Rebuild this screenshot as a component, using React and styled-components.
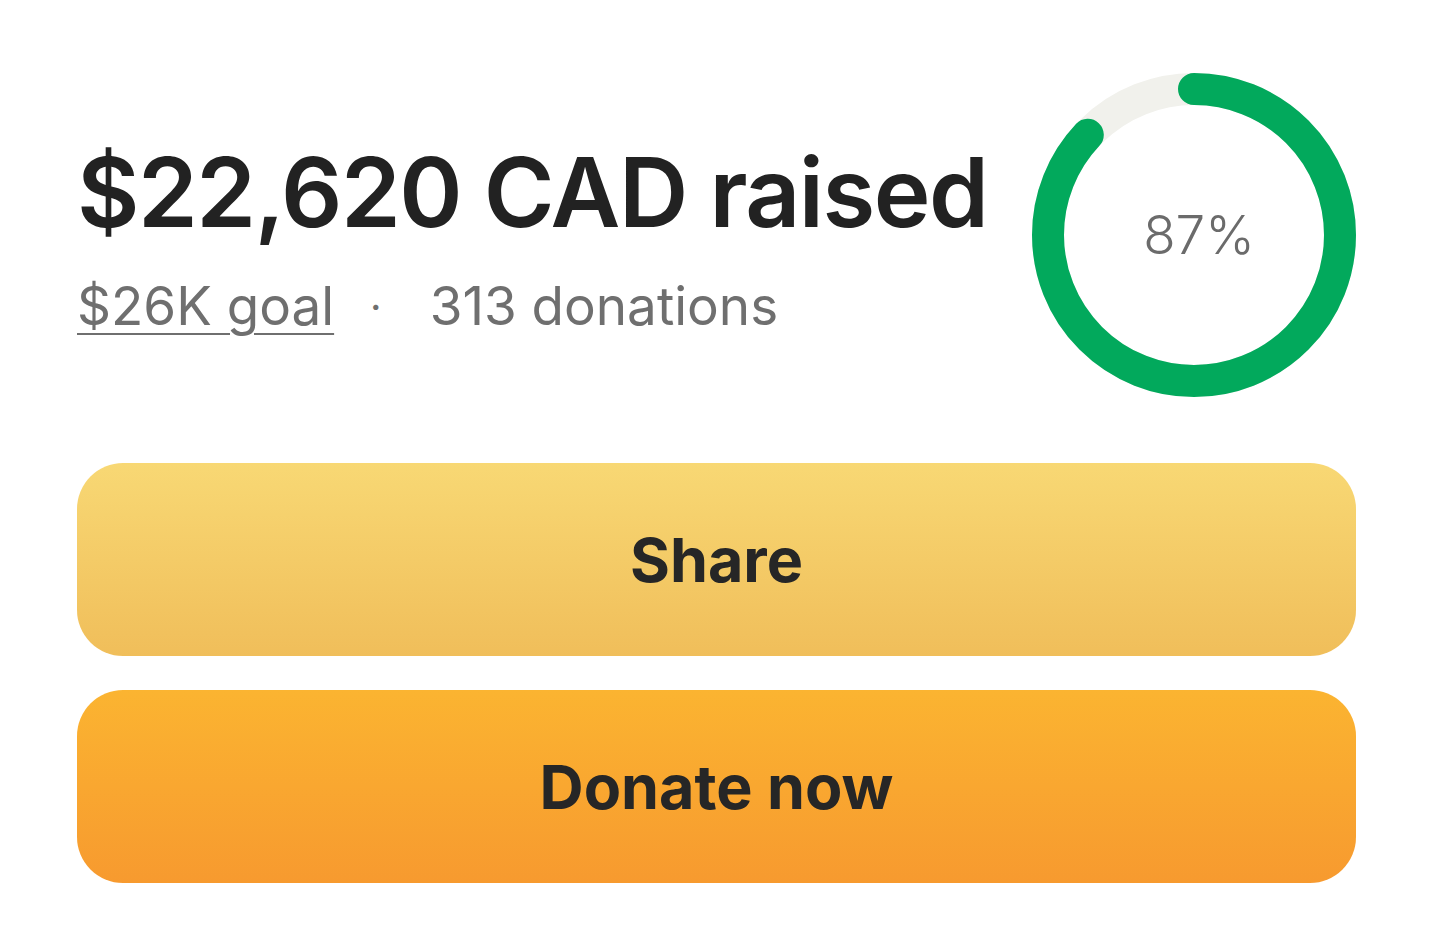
import React from 'react'
import styled, { createGlobalStyle } from 'styled-components'

const GlobalStyle = createGlobalStyle`
    body {
        margin: 0;
        background: #ffffff;
        font-family: Inter, "Liberation Sans", sans-serif;
    }
`

const Wrapper = styled.div`
    width: 1440px;
    height: 929px;
    box-sizing: border-box;
    padding: 72px 84px 0 77px;
    display: flex;
    flex-direction: column;
`

const Top = styled.div`
    display: flex;
    justify-content: space-between;
    align-items: flex-start;
`

const Stats = styled.div`
    display: flex;
    flex-direction: column;
    padding-top: 72px;
    white-space: nowrap;
`

const Raised = styled.div`
    font-size: 96px;
    font-weight: 600;
    color: #222222;
    letter-spacing: -1.5px;
    line-height: 1;
`

const Sub = styled.div`
    display: flex;
    align-items: center;
    margin-top: 40px;
    font-size: 53px;
    color: #6f6f6f;
    line-height: 1;
`

const Goal = styled.span`
    text-decoration: underline;
    text-decoration-thickness: 2px;
    text-underline-offset: 8px;
`

const Dot = styled.span`
    margin: 0 48px 0 36px;
    font-size: 40px;
`

const Ring = styled.div`
    position: relative;
    flex-shrink: 0;
    width: 324px;
    height: 326px;
`

const Percent = styled.div`
    position: absolute;
    inset: 0;
    display: flex;
    align-items: center;
    justify-content: center;
    padding-left: 10px;
    font-size: 53px;
    font-weight: 300;
    color: #6b6b6b;
`

const Buttons = styled.div`
    display: flex;
    flex-direction: column;
    gap: 34px;
    margin-top: 65px;
`

const Button = styled.button`
    height: 193px;
    border: none;
    border-radius: 46px;
    font-family: inherit;
    font-size: 61px;
    font-weight: 700;
    color: #262626;
    background: ${p => p.$primary
        ? 'linear-gradient(180deg, #fbb431 0%, #f79a2f 100%)'
        : 'linear-gradient(180deg, #f8d874 0%, #f0be5a 100%)'};
`

const ProgressRing = ({ value }) => {
    const r = 146
    const c = 2 * Math.PI * r
    return (
        <Ring>
            <svg width="324" height="326" viewBox="0 0 324 326">
                <circle cx="162" cy="163" r={r} fill="none" stroke="#f1f1ec" strokeWidth="32" />
                <circle
                    cx="162" cy="163" r={r} fill="none" stroke="#02a95c" strokeWidth="32"
                    strokeLinecap="round"
                    strokeDasharray={`${c * value / 100} ${c}`}
                    transform="rotate(-90 162 163)"
                />
            </svg>
            <Percent>{value}%</Percent>
        </Ring>
    )
}

const App = () => {
    return (
        <Wrapper>
            <GlobalStyle />
            <Top>
                <Stats>
                    <Raised>$22,620 CAD raised</Raised>
                    <Sub>
                        <Goal>$26K goal</Goal>
                        <Dot>·</Dot>
                        <span>313 donations</span>
                    </Sub>
                </Stats>
                <ProgressRing value={87} />
            </Top>
            <Buttons>
                <Button>Share</Button>
                <Button $primary>Donate now</Button>
            </Buttons>
        </Wrapper>
    )
}

export default App
